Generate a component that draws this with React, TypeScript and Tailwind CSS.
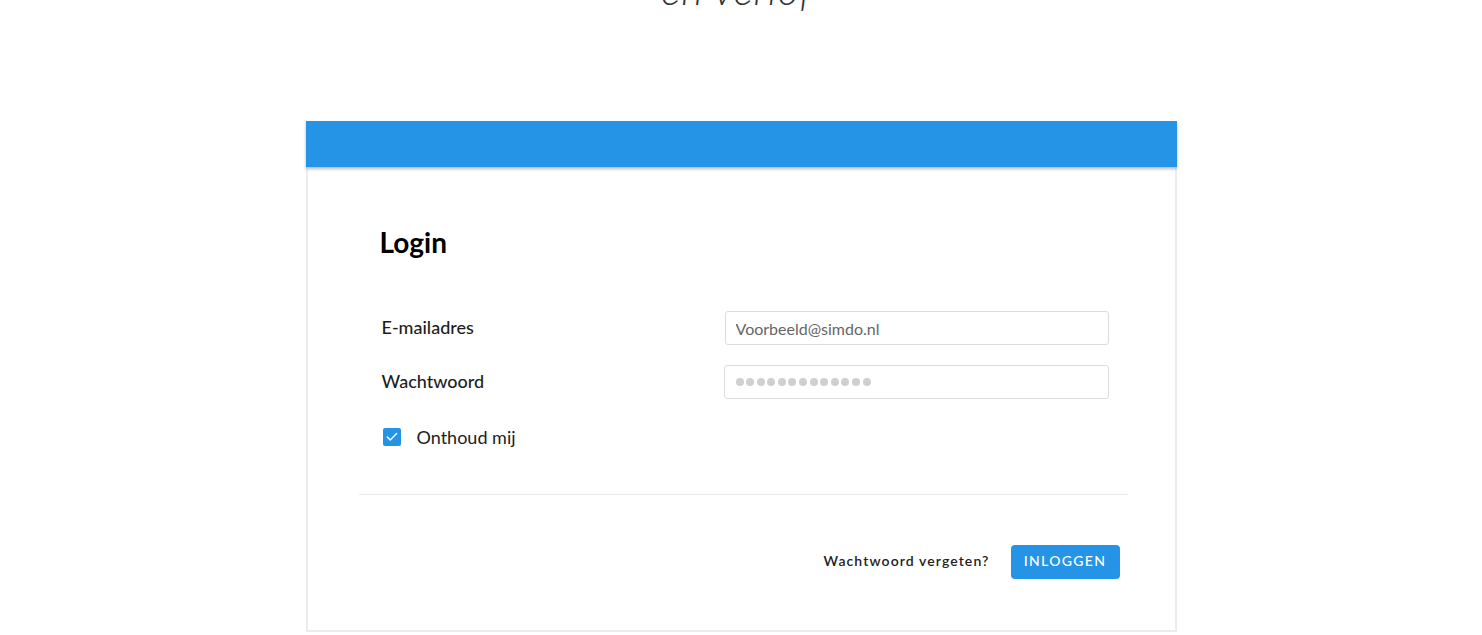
import { Check } from "lucide-react";

export default function App() {
  return (
    <div className="min-h-screen bg-white flex flex-col items-center overflow-hidden font-['Lato','Noto_Sans',sans-serif] text-[#1d1d1d]">
      <h1 className="mt-[-30px] text-[41px] leading-[40px] font-light italic text-[#333] tracking-[1px] pr-[8px]">
        en verlof
      </h1>

      <div className="mt-[111px] w-[871px] bg-white border-x-2 border-b-2 border-[#ececec]">
        <div className="h-[46px] -mx-[2px] bg-[#2594e6] shadow-[0_2px_3px_rgba(0,0,0,0.28)]" />

        <div className="pl-[72px] pr-[66px] pt-[58px]">
          <h2 className="text-[28px] leading-[34px] font-bold text-black">Login</h2>

          <div className="mt-[52px] flex items-center h-[34px]">
            <label className="w-[345px] pl-[2px] text-[18px] font-medium pb-[2px]">E-mailadres</label>
            <input
              className="flex-1 h-[34px] rounded-[3px] border border-[#dcdcdc] px-[10px] text-[16px] text-[#555] placeholder:text-[#666] outline-none"
              placeholder="Voorbeeld@simdo.nl"
            />
          </div>

          <div className="mt-[20px] flex items-center h-[34px]">
            <label className="w-[344px] pl-[2px] text-[18px] font-medium pb-[2px]">Wachtwoord</label>
            <div className="flex-1 h-[34px] rounded-[3px] border border-[#dcdcdc] px-[11px] flex items-center gap-[2.6px]">
              {Array.from({ length: 13 }).map((_, i) => (
                <span key={i} className="w-[8px] h-[8px] rounded-full bg-[#d0d0d0]" />
              ))}
            </div>
          </div>

          <div className="mt-[26px] flex items-center h-[24px] pl-[3px]">
            <span className="w-[18px] h-[18px] rounded-[2px] bg-[#2594e6] flex items-center justify-center">
              <Check size={14} strokeWidth={2.5} className="text-white" />
            </span>
            <span className="ml-[16px] text-[18px]">Onthoud mij</span>
          </div>
        </div>

        <div className="mt-[45px] ml-[51px] mr-[47px] border-t border-[#ebebeb]" />

        <div className="pt-[50px] pb-[51px] pr-[55px] flex items-center justify-end gap-[21px]">
          <span className="text-[14px] font-semibold tracking-[1.1px] text-[#222] mt-[-3px]">Wachtwoord vergeten?</span>
          <button className="w-[109px] h-[34px] rounded-[4px] bg-[#2594e6] text-white text-[14px] font-medium tracking-[1.3px] pb-[3px]">
            INLOGGEN
          </button>
        </div>
      </div>
    </div>
  );
}
